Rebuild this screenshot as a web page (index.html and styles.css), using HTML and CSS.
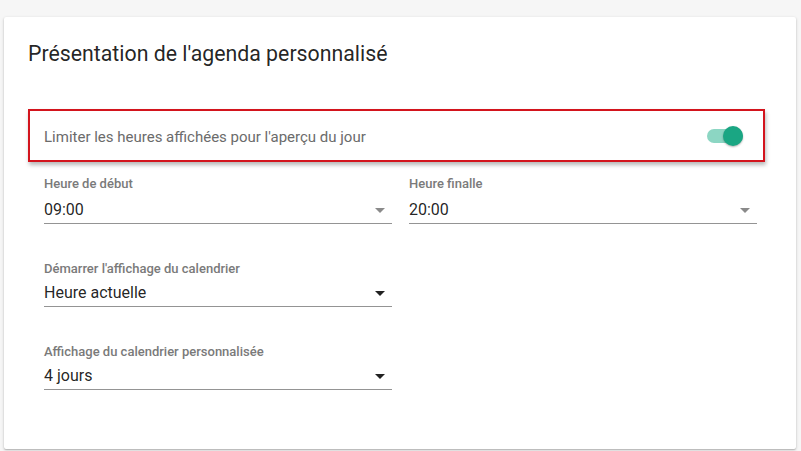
FILE: index.html
```html
<!DOCTYPE html>
<html lang="fr">
<head>
<meta charset="utf-8">
<title>Présentation de l'agenda personnalisé</title>
<link rel="stylesheet" href="styles.css">
</head>
<body>
<main class="card">
  <h1 class="card-title">Présentation de l'agenda personnalisé</h1>
  <div class="toggle-row">
    <span class="toggle-label">Limiter les heures affichées pour l'aperçu du jour</span>
    <span class="toggle" role="switch" aria-checked="true">
      <span class="toggle-track"></span>
      <span class="toggle-thumb"></span>
    </span>
  </div>
  <div class="fields">
    <div class="field field-time">
      <div class="field-label">Heure de début</div>
      <div class="field-control">
        <span class="field-value">09:00</span>
        <span class="arrow arrow-muted"></span>
      </div>
    </div>
    <div class="field field-time">
      <div class="field-label">Heure finalle</div>
      <div class="field-control">
        <span class="field-value">20:00</span>
        <span class="arrow arrow-muted"></span>
      </div>
    </div>
    <div class="field">
      <div class="field-label">Démarrer l'affichage du calendrier</div>
      <div class="field-control">
        <span class="field-value">Heure actuelle</span>
        <span class="arrow"></span>
      </div>
    </div>
    <div></div>
    <div class="field">
      <div class="field-label">Affichage du calendrier personnalisée</div>
      <div class="field-control">
        <span class="field-value">4 jours</span>
        <span class="arrow"></span>
      </div>
    </div>
  </div>
</main>
</body>
</html>
```

FILE: styles.css
```css
html, body {
  margin: 0;
  padding: 0;
}
body {
  background: #f6f6f6;
  font-family: Roboto, "Liberation Sans", Arial, sans-serif;
  padding: 17px 5px 2px 4px;
  height: 451px;
  box-sizing: border-box;
  overflow: hidden;
}
.card {
  background: #ffffff;
  height: 432px;
  box-sizing: border-box;
  padding: 24px 0 0 24px;
  box-shadow: 0 1px 3px rgba(0,0,0,0.22), 0 1px 1px rgba(0,0,0,0.12);
  border-radius: 2px;
}
.card-title {
  margin: 0;
  font-size: 21.3px;
  line-height: 25px;
  font-weight: 400;
  color: rgba(0,0,0,0.87);
}
.toggle-row {
  margin-top: 43px;
  width: 737px;
  height: 53px;
  box-sizing: border-box;
  border: 2px solid #d3141d;
  box-shadow: 1px 3px 4px rgba(0,0,0,0.28);
  display: flex;
  align-items: center;
  justify-content: space-between;
  padding: 0 20px 0 14px;
}
.toggle-label {
  font-size: 15px;
  color: #6b6b6b;
  padding-top: 3px;
}
.toggle {
  position: relative;
  width: 36px;
  height: 20px;
  display: inline-block;
}
.toggle-track {
  position: absolute;
  left: 0;
  top: 3px;
  width: 36px;
  height: 14px;
  border-radius: 7px;
  background: #8cd6c3;
}
.toggle-thumb {
  position: absolute;
  right: 0;
  top: 0;
  width: 20px;
  height: 20px;
  border-radius: 50%;
  background: #1aa683;
  box-shadow: 0 1px 2px rgba(0,0,0,0.3);
}
.fields {
  display: grid;
  grid-template-columns: 348px 348px;
  column-gap: 17px;
  row-gap: 37px;
  margin: 14px 0 0 16px;
}
.field-label {
  font-size: 13px;
  line-height: 16px;
  font-weight: 500;
  color: #7a7a7a;
}
.field-control {
  margin-top: 6px;
  display: flex;
  align-items: center;
  justify-content: space-between;
  padding: 0 7px 3px 0;
  border-bottom: 1px solid #949494;
}
.field-time .field-control {
  margin-top: 8px;
}
.field-value {
  font-size: 16px;
  line-height: 20px;
  color: rgba(0,0,0,0.87);
}
.arrow {
  width: 0;
  height: 0;
  border-left: 5px solid transparent;
  border-right: 5px solid transparent;
  border-top: 5px solid #222222;
}
.arrow-muted {
  border-top-color: #8a8a8a;
}
```
